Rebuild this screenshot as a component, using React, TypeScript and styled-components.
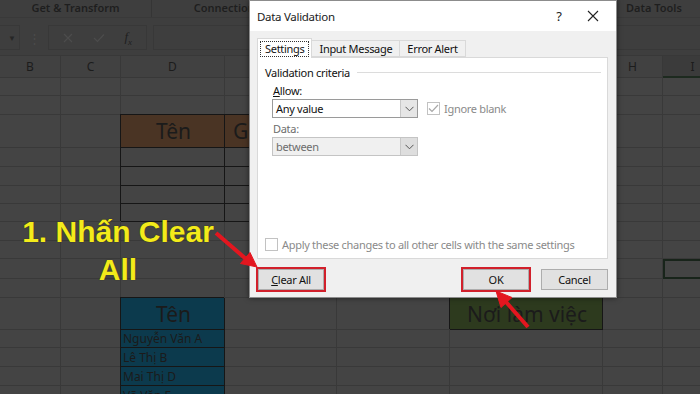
import React from 'react'
import styled, { createGlobalStyle } from 'styled-components'

const GlobalStyle = createGlobalStyle`
  html, body {
    margin: 0;
    padding: 0;
    background: #404040;
  }
  body {
    font-family: "Noto Sans", "Liberation Sans", sans-serif;
  }
`

const Screen = styled.div`
  position: relative;
  width: 700px;
  height: 394px;
  overflow: hidden;
  background: #3e3e3e;
`

/* ---------- ribbon + formula bar ---------- */

const Ribbon = styled.div`
  display: flex;
  height: 17px;
  border-bottom: 1px solid #393939;
`

const RibbonGroup = styled.div<{ $w: number }>`
  flex: none;
  width: ${({ $w }) => $w}px;
  border-right: 1px solid #353535;
  text-align: center;
  font: 600 11px "Noto Sans", sans-serif;
  line-height: 15px;
  color: #1e1e1e;
  white-space: nowrap;
  overflow: hidden;
`

const FormulaBar = styled.div`
  display: flex;
  align-items: stretch;
  height: 25px;
  margin: 7px 0 5px;
`

const NameBox = styled.div`
  flex: none;
  width: 16px;
  border: 1px solid #383838;
  border-left: none;
  display: flex;
  align-items: center;
  justify-content: flex-end;
  padding-right: 3px;
  color: #262626;
  font-size: 8px;
`

const Grip = styled.div`
  flex: none;
  width: 28px;
  display: flex;
  align-items: center;
  justify-content: center;
  color: #4b4b4b;
  font-size: 13px;
`

const EditButtons = styled.div`
  flex: none;
  width: 99px;
  box-sizing: border-box;
  border: 1px solid #383838;
  display: flex;
  align-items: center;
  justify-content: space-around;
  padding: 0 4px;
`

const FxLabel = styled.span`
  font: italic 13px "Liberation Serif", serif;
  color: #1f1f1f;
  & sub {
    font-size: 9px;
  }
`

const FormulaInput = styled.div`
  flex: 1;
  margin-left: 6px;
  border: 1px solid #383838;
  border-right: none;
`

/* ---------- sheet grid ---------- */

const COLS = [61, 60, 104, 112, 113, 153, 60, 60]
const ROWS = [18, 19, 33, 19, 19, 18, 18, 19, 18, 20, 19, 32, 18, 19, 19, 19]
const LETTERS = ['B', 'C', 'D', 'E', 'F', 'G', 'H', 'I']

const Sheet = styled.div`
  display: grid;
  grid-template-columns: ${COLS.map((c) => `${c}px`).join(' ')};
  grid-template-rows: 22px ${ROWS.map((r) => `${r}px`).join(' ')};
  background: #434343;
  border-top: 1px solid #383838;
`

const ColumnHead = styled.div<{ $active?: boolean }>`
  box-sizing: border-box;
  display: flex;
  align-items: center;
  justify-content: center;
  border-right: 1px solid #383838;
  border-bottom: ${({ $active }) => ($active ? '2px solid #1d2a1f' : '1px solid #383838')};
  background: ${({ $active }) => ($active ? '#3b3b3b' : '#414141')};
  font: 12px "Noto Sans", sans-serif;
  color: #1c1c1c;
`

type Fill = 'brown' | 'teal' | 'olive'

const FILLS: Record<Fill, string> = {
  brown: '#4a3424',
  teal: '#0c3a4d',
  olive: '#2d3a1e',
}

const Cell = styled.div<{ $fill?: Fill; $boxed?: boolean; $big?: boolean; $left?: boolean; $selected?: boolean }>`
  box-sizing: border-box;
  display: flex;
  align-items: ${({ $big }) => ($big ? 'center' : 'flex-end')};
  justify-content: ${({ $big, $left }) => ($big && !$left ? 'center' : 'flex-start')};
  padding-left: ${({ $left }) => ($left ? 8 : 2)}px;
  background: ${({ $fill }) => ($fill ? FILLS[$fill] : '#444444')};
  border-right: 1px solid ${({ $boxed }) => ($boxed ? '#161616' : '#393939')};
  border-bottom: 1px solid ${({ $boxed }) => ($boxed ? '#161616' : '#393939')};
  box-shadow: ${({ $boxed }) => ($boxed ? '-1px -1px 0 #161616' : 'none')};
  outline: ${({ $selected }) => ($selected ? '2px solid #18241a' : 'none')};
  outline-offset: -2px;
  font: ${({ $big }) => ($big ? '21px' : '12px')} "Noto Sans", sans-serif;
  line-height: ${({ $big }) => ($big ? '28px' : '16px')};
  color: #1b1b1b;
  white-space: nowrap;
  overflow: hidden;
`

interface CellSpec {
  text?: string
  fill?: Fill
  boxed?: boolean
  big?: boolean
  left?: boolean
  selected?: boolean
}

const CELLS: Record<string, CellSpec> = {
  '2,2': { text: 'Tên', fill: 'brown', boxed: true, big: true },
  '2,3': { text: 'Giới tính', fill: 'brown', boxed: true, big: true, left: true },
  '11,2': { text: 'Tên', fill: 'teal', boxed: true, big: true },
  '12,2': { text: 'Nguyễn Văn A', fill: 'teal', boxed: true },
  '13,2': { text: 'Lê Thị B', fill: 'teal', boxed: true },
  '14,2': { text: 'Mai Thị D', fill: 'teal', boxed: true },
  '15,2': { text: 'Võ Văn E', fill: 'teal', boxed: true },
  '11,5': { text: 'Nơi làm việc', fill: 'olive', boxed: true, big: true },
  '9,7': { selected: true },
}
for (let r = 3; r <= 6; r++) {
  CELLS[`${r},2`] = { boxed: true }
  CELLS[`${r},3`] = { boxed: true }
}

const Spreadsheet = () => (
  <Sheet>
    {LETTERS.map((l) => (
      <ColumnHead key={l} $active={l === 'I'}>
        {l}
      </ColumnHead>
    ))}
    {ROWS.map((_, r) =>
      COLS.map((__, c) => {
        const spec = CELLS[`${r},${c}`] ?? {}
        return (
          <Cell
            key={`${r}-${c}`}
            $fill={spec.fill}
            $boxed={spec.boxed}
            $big={spec.big}
            $left={spec.left}
            $selected={spec.selected}
          >
            {spec.text}
          </Cell>
        )
      })
    )}
  </Sheet>
)

/* ---------- dialog ---------- */

const Dialog = styled.div`
  position: absolute;
  left: 249px;
  top: 0;
  width: 368px;
  height: 298px;
  box-sizing: border-box;
  display: flex;
  flex-direction: column;
  background: #f0f0f0;
  border: 1px solid #8c8c8c;
  box-shadow: 0 0 5px rgba(0, 0, 0, 0.55);
  font: 11px "Noto Sans", sans-serif;
  letter-spacing: -0.3px;
  color: #111;
`

const TitleBar = styled.div`
  flex: none;
  height: 30px;
  display: flex;
  align-items: center;
  padding-left: 7px;
  background: #ffffff;
`

const Title = styled.div`
  flex: 1;
  font-size: 11.5px;
  color: #1a1a1a;
`

const TitleButton = styled.div<{ $w: number }>`
  width: ${({ $w }) => $w}px;
  height: 30px;
  display: flex;
  align-items: center;
  justify-content: center;
  font-size: 13px;
  color: #222;
`

const TabStrip = styled.div`
  flex: none;
  display: flex;
  align-items: flex-end;
  height: 20px;
  margin-top: 6px;
  padding-left: 8px;
`

const Tab = styled.div<{ $active?: boolean }>`
  box-sizing: border-box;
  height: ${({ $active }) => ($active ? 20 : 17)}px;
  margin-left: -1px;
  margin-bottom: ${({ $active }) => ($active ? -1 : 0)}px;
  padding: 0 ${({ $active }) => ($active ? 2 : 7)}px;
  display: flex;
  align-items: center;
  background: ${({ $active }) => ($active ? '#ffffff' : '#f0f0f0')};
  border: 1px solid #d9d9d9;
  border-bottom: ${({ $active }) => ($active ? 'none' : '1px solid #d9d9d9')};
  position: relative;
  z-index: ${({ $active }) => ($active ? 1 : 0)};
  white-space: nowrap;
`

const FocusRing = styled.span`
  border: 1px dotted #333;
  padding: 0 4px;
  line-height: 14px;
`

const Panel = styled.div`
  flex: none;
  height: 202px;
  box-sizing: border-box;
  margin: 0 8px 0 7px;
  padding: 7px 6px 6px 7px;
  display: flex;
  flex-direction: column;
  background: #ffffff;
  border: 1px solid #d9d9d9;
`

const Legend = styled.div`
  display: flex;
  align-items: center;
  line-height: 15px;
  &::after {
    content: '';
    flex: 1;
    margin: 0 0 0 7px;
    border-top: 1px solid #dcdcdc;
  }
`

const FieldLabel = styled.div<{ $dim?: boolean }>`
  margin: 3px 0 0 8px;
  line-height: 15px;
  color: ${({ $dim }) => ($dim ? '#6d6d6d' : '#111')};
  & u {
    text-decoration-thickness: 1px;
  }
`

const FieldRow = styled.div`
  display: flex;
  align-items: center;
  margin: 1px 0 0 7px;
`

const Select = styled.div<{ $disabled?: boolean }>`
  box-sizing: border-box;
  width: 146px;
  height: 19px;
  display: flex;
  align-items: center;
  border: 1px solid ${({ $disabled }) => ($disabled ? '#c4c4c4' : '#9a9a9a')};
  background: ${({ $disabled }) => ($disabled ? '#f0f0f0' : '#ffffff')};
  color: ${({ $disabled }) => ($disabled ? '#6d6d6d' : '#111')};
`

const SelectValue = styled.span`
  flex: 1;
  padding-left: 3px;
`

const DropButton = styled.span<{ $disabled?: boolean }>`
  width: 16px;
  height: 100%;
  display: flex;
  align-items: center;
  justify-content: center;
  border-left: 1px solid #c8c8c8;
  background: ${({ $disabled }) => ($disabled ? '#dedede' : '#e6e6e6')};
`

const Check = styled.span`
  box-sizing: border-box;
  flex: none;
  width: 13px;
  height: 13px;
  display: inline-flex;
  align-items: center;
  justify-content: center;
  border: 1px solid #c2c2c2;
  background: #fff;
`

const CheckText = styled.span`
  margin-left: 4px;
  color: #8a8a8a;
  white-space: nowrap;
`

const CheckRow = styled.div<{ $indent?: number }>`
  display: flex;
  align-items: center;
  margin-left: ${({ $indent }) => $indent ?? 0}px;
`

const Spacer = styled.div`
  flex: 1;
`

const Footer = styled.div`
  flex: none;
  display: flex;
  align-items: center;
  margin-top: 10px;
  padding: 0 8px 0 8px;
`

const Button = styled.div<{ $flag?: boolean; $w?: number; $gap?: number }>`
  box-sizing: border-box;
  width: ${({ $w }) => $w ?? 66}px;
  height: 21px;
  margin-left: ${({ $gap }) => $gap ?? 0}px;
  display: flex;
  align-items: center;
  justify-content: center;
  background: #e1e1e1;
  border: 1px solid #adadad;
  outline: ${({ $flag }) => ($flag ? '2px solid #d1202b' : 'none')};
  & u {
    text-decoration-thickness: 1px;
  }
`

const Chevron = () => (
  <svg width="9" height="6" viewBox="0 0 9 6">
    <path d="M0.5 0.8 L4.5 4.8 L8.5 0.8" fill="none" stroke="#555" strokeWidth="1" />
  </svg>
)

const Tick = () => (
  <svg width="11" height="9" viewBox="0 0 11 9">
    <path d="M1 4.5 L4 7.5 L10 1" fill="none" stroke="#a8a8a8" strokeWidth="1.2" />
  </svg>
)

const DataValidationDialog = () => (
  <Dialog>
    <TitleBar>
      <Title>Data Validation</Title>
      <TitleButton $w={22}>?</TitleButton>
      <TitleButton $w={46}>
        <svg width="12" height="12" viewBox="0 0 12 12">
          <path d="M1 1 L11 11 M11 1 L1 11" stroke="#222" strokeWidth="1.1" />
        </svg>
      </TitleButton>
    </TitleBar>

    <TabStrip>
      <Tab $active>
        <FocusRing>Settings</FocusRing>
      </Tab>
      <Tab>Input Message</Tab>
      <Tab>Error Alert</Tab>
    </TabStrip>

    <Panel>
      <Legend>Validation criteria</Legend>
      <FieldLabel>
        <u>A</u>llow:
      </FieldLabel>
      <FieldRow>
        <Select>
          <SelectValue>Any value</SelectValue>
          <DropButton>
            <Chevron />
          </DropButton>
        </Select>
        <CheckRow $indent={9}>
          <Check>
            <Tick />
          </Check>
          <CheckText>Ignore blank</CheckText>
        </CheckRow>
      </FieldRow>
      <FieldLabel $dim>Data:</FieldLabel>
      <FieldRow>
        <Select $disabled>
          <SelectValue>between</SelectValue>
          <DropButton $disabled>
            <Chevron />
          </DropButton>
        </Select>
      </FieldRow>
      <Spacer />
      <CheckRow>
        <Check />
        <CheckText>Apply these changes to all other cells with the same settings</CheckText>
      </CheckRow>
    </Panel>

    <Footer>
      <Button $flag>
        <u>C</u>lear All
      </Button>
      <Spacer />
      <Button $flag>OK</Button>
      <Button $w={67} $gap={12}>
        Cancel
      </Button>
    </Footer>
  </Dialog>
)

/* ---------- annotations ---------- */

const Callout = styled.div`
  position: absolute;
  left: 0;
  top: 213px;
  width: 236px;
  text-align: center;
  font: 700 30px "Liberation Sans", Arial, sans-serif;
  line-height: 38px;
  color: #f3eb1b;
  text-shadow: 0 0 1px #2a2a00;
`

const ArrowLayer = styled.svg`
  position: absolute;
  left: 0;
  top: 0;
  pointer-events: none;
`

const Arrows = () => (
  <ArrowLayer width="700" height="394" viewBox="0 0 700 394">
    <g fill="#e3161f" stroke="#e3161f">
      <line x1="216" y1="233" x2="246" y2="259" strokeWidth="4" />
      <polygon points="257,267 240.5,263.5 250,252.5" strokeWidth="1" />
      <line x1="528" y1="327" x2="506" y2="302" strokeWidth="4" />
      <polygon points="496,291 512,297.5 501,307.5" strokeWidth="1" />
    </g>
  </ArrowLayer>
)

export default function App() {
  return (
    <Screen>
      <GlobalStyle />
      <Ribbon>
        <RibbonGroup $w={151}>Get &amp; Transform</RibbonGroup>
        <RibbonGroup $w={150}>Connections</RibbonGroup>
        <RibbonGroup $w={259}>Sort &amp; Filter</RibbonGroup>
        <RibbonGroup $w={182}>Data Tools</RibbonGroup>
      </Ribbon>
      <FormulaBar>
        <NameBox>▼</NameBox>
        <Grip>⋮</Grip>
        <EditButtons>
          <svg width="10" height="10" viewBox="0 0 10 10">
            <path d="M1 1 L9 9 M9 1 L1 9" stroke="#4c4c4c" strokeWidth="1.2" />
          </svg>
          <svg width="12" height="10" viewBox="0 0 12 10">
            <path d="M1 5 L4.5 8.5 L11 1.5" fill="none" stroke="#4c4c4c" strokeWidth="1.2" />
          </svg>
          <FxLabel>
            f<sub>x</sub>
          </FxLabel>
        </EditButtons>
        <FormulaInput />
      </FormulaBar>
      <Spreadsheet />
      <DataValidationDialog />
      <Callout>
        1. Nhấn Clear
        <br />
        All
      </Callout>
      <Arrows />
    </Screen>
  )
}
